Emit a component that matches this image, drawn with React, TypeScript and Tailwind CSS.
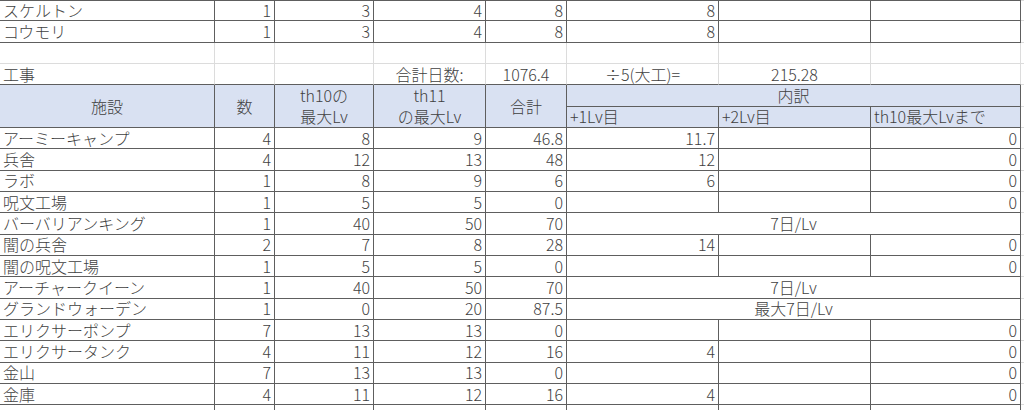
import type { ReactNode } from 'react'

type Align = 'l' | 'r' | 'c'

const alignClass: Record<Align, string> = {
  l: 'justify-start pl-[3px]',
  r: 'justify-end pr-[3px]',
  c: 'justify-center',
}

function Cell({
  children,
  align = 'r',
  light = false,
  head = false,
  span = '',
  top = false,
}: {
  children?: ReactNode
  align?: Align
  light?: boolean
  head?: boolean
  span?: string
  top?: boolean
}) {
  const border = light ? 'border-[#dcdcdc]' : 'border-[#5e5e5e]'
  return (
    <div
      className={`flex items-center whitespace-nowrap overflow-hidden border-r border-b ${border} ${top ? 'border-t' : ''} ${alignClass[align]} ${head ? 'bg-[#d9e1f2]' : 'bg-white'} ${span}`}
    >
      {children}
    </div>
  )
}

type Row = (string | number)[]

const topRows: Row[] = [
  ['スケルトン', 1, 3, 4, 8, 8, '', ''],
  ['コウモリ', 1, 3, 4, 8, 8, '', ''],
]

// [施設, 数, th10, th11, 合計, +1, +2, th10最大] or merged text at index 5
const dataRows: Row[] = [
  ['アーミーキャンプ', 4, 8, 9, 46.8, 11.7, '', 0],
  ['兵舎', 4, 12, 13, 48, 12, '', 0],
  ['ラボ', 1, 8, 9, 6, 6, '', 0],
  ['呪文工場', 1, 5, 5, 0, '', '', 0],
  ['バーバリアンキング', 1, 40, 50, 70, '7日/Lv'],
  ['闇の兵舎', 2, 7, 8, 28, 14, '', 0],
  ['闇の呪文工場', 1, 5, 5, 0, '', '', 0],
  ['アーチャークイーン', 1, 40, 50, 70, '7日/Lv'],
  ['グランドウォーデン', 1, 0, 20, 87.5, '最大7日/Lv'],
  ['エリクサーポンプ', 7, 13, 13, 0, '', '', 0],
  ['エリクサータンク', 4, 11, 12, 16, 4, '', 0],
  ['金山', 7, 13, 13, 0, '', '', 0],
  ['金庫', 4, 11, 12, 16, 4, '', 0],
]

function DataRow({ row, top = false }: { row: Row; top?: boolean }) {
  const merged = row.length === 6
  return (
    <>
      <Cell align="l" top={top}>{row[0]}</Cell>
      {row.slice(1, merged ? 5 : 8).map((v, i) => (
        <Cell key={i} top={top}>{v}</Cell>
      ))}
      {merged && (
        <Cell align="c" span="col-span-3">
          {row[5]}
        </Cell>
      )}
      <Cell light top={top} />
    </>
  )
}

const sumCell = 'flex items-center justify-center border-r border-[#dcdcdc] border-b border-b-[#5e5e5e]'

export default function App() {
  return (
    <div
      className="w-[1024px] h-[410px] overflow-hidden bg-white text-[16px] leading-[19px] font-light text-[#3f3f3f]"
      style={{ fontFamily: '"Noto Sans CJK JP", "Noto Sans", sans-serif' }}
    >
      <div className="grid grid-cols-[215px_60px_99px_112px_81px_152px_152px_150px_1fr] auto-rows-[21.33px]">
        {/* units above */}
        {topRows.map((r, i) => (
          <DataRow key={i} row={r} top={i === 0} />
        ))}

        {/* empty row */}
        {Array.from({ length: 9 }).map((_, i) => (
          <Cell key={'e' + i} light />
        ))}

        {/* 工事 summary row */}
        <div className="flex items-center pl-[3px] border-r border-[#dcdcdc] border-b border-b-[#5e5e5e]">工事</div>
        <div className={sumCell} />
        <div className={sumCell} />
        <div className={sumCell}>合計日数:</div>
        <div className={sumCell}>1076.4</div>
        <div className={sumCell}>÷5(大工)=</div>
        <div className={sumCell}>215.28</div>
        <div className={sumCell} />
        <Cell light />

        {/* header */}
        <Cell head align="c" span="row-span-2">施設</Cell>
        <Cell head align="c" span="row-span-2">数</Cell>
        <Cell head align="c" span="row-span-2 flex-col gap-[2px]">
          <span>th10の</span>
          <span>最大Lv</span>
        </Cell>
        <Cell head align="c" span="row-span-2 flex-col gap-[2px]">
          <span>th11</span>
          <span>の最大Lv</span>
        </Cell>
        <Cell head align="c" span="row-span-2">合計</Cell>
        <Cell head align="c" span="col-span-3">内訳</Cell>
        <Cell light />
        <Cell head align="l">+1Lv目</Cell>
        <Cell head align="l">+2Lv目</Cell>
        <Cell head align="l">th10最大Lvまで</Cell>
        <Cell light />

        {dataRows.map((r, i) => (
          <DataRow key={i} row={r} />
        ))}
        <DataRow row={['', '', '', '', '', '', '', '']} />
      </div>
    </div>
  )
}
